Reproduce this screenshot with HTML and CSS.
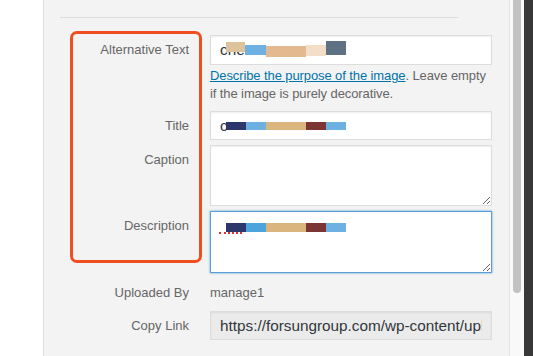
FILE: index.html
```html
<!DOCTYPE html>
<html>
<head>
<meta charset="utf-8">
<link rel="stylesheet" href="styles.css">
</head>
<body>
<div class="page">
  <div class="gutter"></div>
  <div class="panel">
    <hr class="divider">
    <div class="settings">
      <div class="row row-alt">
        <label class="label">Alternative Text</label>
        <div class="field">
          <div class="masked">
            <input class="input" type="text" value="che">
            <div class="redact redact-alt">
              <span class="b b20 a1"></span><span class="b b21 a2"></span><span class="b b40 a3"></span><span class="b b20 a4"></span><span class="b b20 a5"></span>
            </div>
          </div>
          <div class="help"><a href="#" class="link">Describe the purpose of the image</a><span class="help-rest">. Leave empty</span><span class="help-line">if the image is purely decorative.</span></div>
        </div>
      </div>
      <div class="row row-title">
        <label class="label">Title</label>
        <div class="field">
          <div class="masked">
            <input class="input" type="text" value="c">
            <div class="redact redact-title">
              <span class="b b20 navy"></span><span class="b b20 sky"></span><span class="b b40 tan"></span><span class="b b20 maroon"></span><span class="b b20 sky"></span>
            </div>
          </div>
        </div>
      </div>
      <div class="row row-caption">
        <label class="label">Caption</label>
        <div class="field">
          <textarea class="area"></textarea>
        </div>
      </div>
      <div class="row row-desc">
        <label class="label">Description</label>
        <div class="field">
          <div class="masked">
            <textarea class="area area-focus"></textarea>
            <div class="redact redact-desc">
              <span class="b b20 navy"></span><span class="b b20 blue"></span><span class="b b40 tan"></span><span class="b b20 maroon"></span><span class="b b20 sky"></span>
            </div>
            <span class="spell"></span>
          </div>
        </div>
      </div>
      <div class="row row-upl">
        <label class="label label-plain">Uploaded By</label>
        <div class="field value">manage1</div>
      </div>
      <div class="row row-link">
        <label class="label">Copy Link</label>
        <div class="field">
          <input class="input input-ro" type="text" readonly value="https://forsungroup.com/wp-content/uploads/2019/05/che-setting-machine.jpg">
        </div>
      </div>
    </div>
    <div class="annot"></div>
  </div>
  <div class="scrollbar"><div class="thumb"></div></div>
  <div class="dark"></div>
</div>
</body>
</html>
```
FILE: styles.css
```css
html, body {
  margin: 0;
  padding: 0;
}
body {
  font-family: "Liberation Sans", Arial, sans-serif;
  font-size: 13px;
  color: #666;
}
.page {
  display: flex;
  width: 533px;
  height: 356px;
  overflow: hidden;
}
.gutter {
  width: 43px;
  background: #fff;
  flex: none;
}
.panel {
  position: relative;
  width: 465px;
  flex: none;
  background: #f3f3f3;
  border-left: 1px solid #dedede;
  border-right: 1px solid #e4e4e4;
}
.divider {
  margin: 17px 0 0 16px;
  width: 398px;
  height: 0;
  border: 0;
  border-top: 1px solid #dcdcdc;
}
.settings {
  margin-top: 17px;
  padding-left: 16px;
}
.row {
  display: flex;
  gap: 21px;
}
.label {
  width: 129px;
  flex: none;
  text-align: right;
  padding-top: 6px;
  line-height: 18px;
  color: #666;
}
.label-plain {
  padding-top: 0;
}
.field {
  width: 282px;
  flex: none;
}
.value {
  line-height: 18px;
  color: #666;
}
.row-title { margin-top: 8px; }
.row-caption { margin-top: 5px; }
.row-desc { margin-top: 5px; }
.row-upl { margin-top: 11px; }
.row-link { margin-top: 9px; }

.masked {
  position: relative;
}
.input {
  display: block;
  box-sizing: border-box;
  width: 282px;
  height: 30px;
  margin: 0;
  padding: 0 9px;
  border: 1px solid #dddddd;
  background: #fff;
  box-shadow: inset 0 1px 2px rgba(0,0,0,0.07);
  font-family: "Liberation Sans", Arial, sans-serif;
  font-size: 15.3px;
  color: #32373c;
  outline: none;
}
.row-title .input,
.input-ro {
  height: 29px;
}
.input-ro {
  background: #ebebeb;
  color: #32373c;
}
.area {
  display: block;
  box-sizing: border-box;
  width: 282px;
  height: 61px;
  margin: 0;
  padding: 6px 9px;
  border: 1px solid #dddddd;
  background: #fff;
  box-shadow: inset 0 1px 2px rgba(0,0,0,0.07);
  font-family: "Liberation Sans", Arial, sans-serif;
  font-size: 15.3px;
  line-height: 20px;
  color: #32373c;
  resize: vertical;
  outline: none;
}
.area-focus {
  height: 62px;
  border-color: #5b9dd9;
  box-shadow: 0 0 2px rgba(30,140,190,0.8);
}
.help {
  display: flex;
  flex-wrap: wrap;
  margin: 2px 0 0;
  line-height: 18px;
  color: #666;
  letter-spacing: -0.1px;
  white-space: pre;
}
.help-line {
  width: 100%;
}
.link {
  color: #0073aa;
  text-decoration: underline;
}

.redact {
  position: absolute;
  left: 16px;
  display: flex;
  align-items: flex-start;
}
.redact-alt { top: 6px; }
.redact-title { top: 11px; }
.redact-desc { top: 12px; }
.b { display: block; height: 8px; }
.redact-desc .b { height: 9px; }
.b20 { width: 20px; }
.b21 { width: 21px; }
.b40 { width: 40px; }
.navy { background: #2e376c; }
.sky { background: #6cb1e1; }
.blue { background: #4ba5dc; }
.tan { background: #dbb57e; }
.maroon { background: #7b3535; }
.a1 { background: #dcc39c; height: 10px; margin-top: 1px; width: 19px; }
.a2 { background: #6db2e2; height: 10px; margin-top: 4px; }
.a3 { background: #e3ba8f; height: 11px; margin-top: 5px; }
.a4 { background: #f3dfc8; height: 11px; margin-top: 4px; }
.a5 { background: #5e7283; height: 14px; margin-top: 0; }
.spell {
  position: absolute;
  left: 9px;
  top: 21px;
  width: 23px;
  border-top: 2px dotted #e0303a;
}

.annot {
  position: absolute;
  left: 26px;
  top: 31px;
  width: 132px;
  height: 232px;
  box-sizing: border-box;
  border: 3px solid #f04e1f;
  border-radius: 7px;
}

.scrollbar {
  width: 14px;
  flex: none;
  background: #f9f9f9;
}
.thumb {
  margin-left: 3px;
  width: 8px;
  height: 293px;
  background: #c2c2c2;
  border-radius: 0 0 4px 4px;
}
.dark {
  flex: 1;
  background: #383838;
}
```
